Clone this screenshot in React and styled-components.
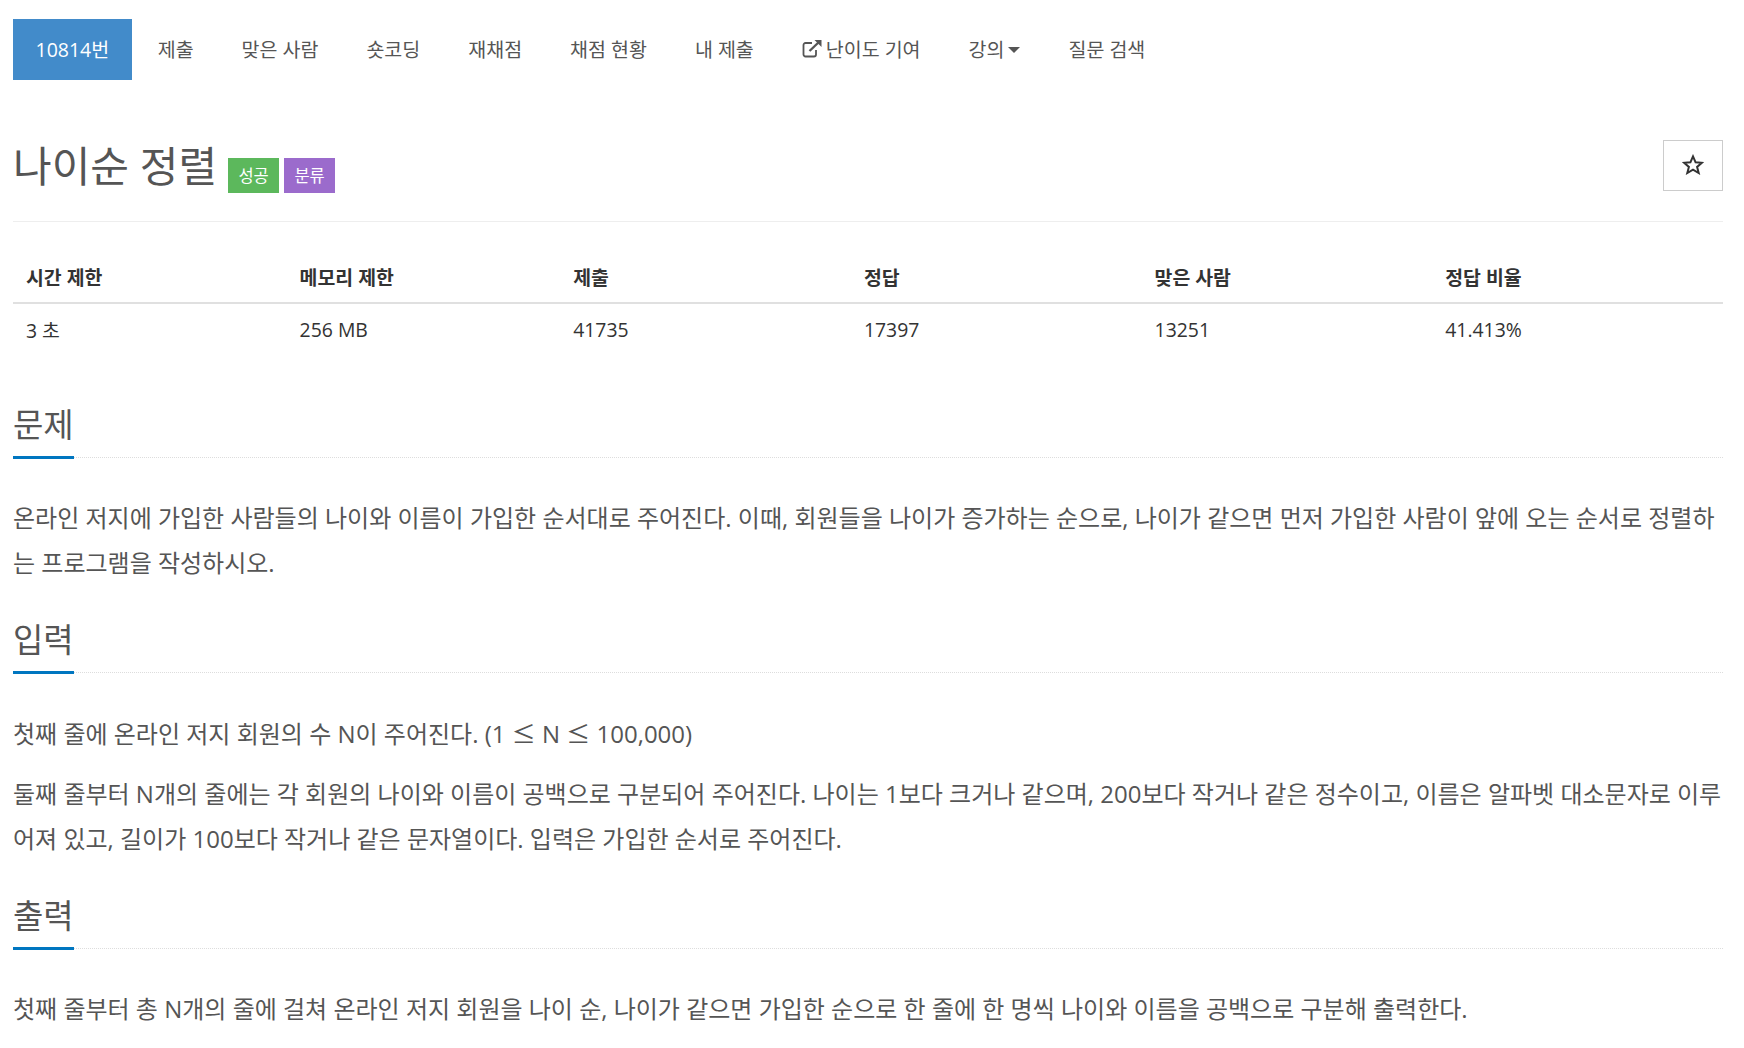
import React from "react";
import styled, { createGlobalStyle } from "styled-components";

const FONT = `"Open Sans", "Noto Sans CJK KR", sans-serif`;

const tabs = [
  { label: "10814번", active: true },
  { label: "제출" },
  { label: "맞은 사람" },
  { label: "숏코딩" },
  { label: "재채점" },
  { label: "채점 현황" },
  { label: "내 제출" },
  { label: "난이도 기여", external: true },
  { label: "강의", caret: true },
  { label: "질문 검색" },
];

const columns = [
  { title: "시간 제한", value: "3 초", width: "16%" },
  { title: "메모리 제한", value: "256 MB", width: "16%" },
  { title: "제출", value: "41735", width: "17%" },
  { title: "정답", value: "17397", width: "17%" },
  { title: "맞은 사람", value: "13251", width: "17%" },
  { title: "정답 비율", value: "41.413%", width: "17%" },
];

function ExternalIcon() {
  return (
    <svg width="21" height="19" viewBox="0 0 21 19" fill="none" stroke="currentColor">
      <path d="M14 11v4.5a2 2 0 0 1-2 2H3.5a2 2 0 0 1-2-2V6a2 2 0 0 1 2-2H10" strokeWidth="1.8" />
      <path d="M7.5 12L17 3" strokeWidth="2.4" />
      <path d="M12.5 1h7v7z" fill="currentColor" stroke="none" />
    </svg>
  );
}

function StarIcon() {
  return (
    <svg width="22" height="21" viewBox="0 0 22 21" fill="none" stroke="#333" strokeWidth="2">
      <path d="M11 2.4l2.6 5.9 6.3.5-4.8 4.1 1.6 6.1L11 15.7l-5.7 3.3 1.6-6.1L2.100 8.800l6.300-.5z" />
    </svg>
  );
}

export default function App() {
  return (
    <>
      <GlobalStyle />
      <Page>
        <TabBar>
          {tabs.map((tab) => (
            <Tab key={tab.label} $active={tab.active}>
              {tab.external && <ExternalIcon />}
              {tab.label}
              {tab.caret && <Caret />}
            </Tab>
          ))}
        </TabBar>

        <TitleRow>
          <Title>
            나이순 정렬
            <Badge $color="#5cb85c" $first>성공</Badge>
            <Badge $color="#9b6bcc">분류</Badge>
          </Title>
          <StarButton>
            <StarIcon />
          </StarButton>
        </TitleRow>

        <InfoTable>
          <colgroup>
            {columns.map((col) => (
              <col key={col.title} width={col.width} />
            ))}
          </colgroup>
          <thead>
            <tr>
              {columns.map((col) => (
                <HeadCell key={col.title}>{col.title}</HeadCell>
              ))}
            </tr>
          </thead>
          <tbody>
            <tr>
              {columns.map((col) => (
                <BodyCell key={col.title}>{col.value}</BodyCell>
              ))}
            </tr>
          </tbody>
        </InfoTable>

        <Section $top="42px">
          <SectionHead>
            <SectionTitle>문제</SectionTitle>
          </SectionHead>
          <Body>
            <Para>
              온라인 저지에 가입한 사람들의 나이와 이름이 가입한 순서대로 주어진다. 이때, 회원들을 나이가
              증가하는 순으로, 나이가 같으면 먼저 가입한 사람이 앞에 오는 순서로 정렬하는 프로그램을
              작성하시오.
            </Para>
          </Body>
        </Section>

        <Section $top="27px">
          <SectionHead>
            <SectionTitle>입력</SectionTitle>
          </SectionHead>
          <Body>
            <Para>
              첫째 줄에 온라인 저지 회원의 수 N이 주어진다. (1 <MathSign>≤</MathSign> N{" "}
              <MathSign>≤</MathSign> 100,000)
            </Para>
            <Para>
              둘째 줄부터 N개의 줄에는 각 회원의 나이와 이름이 공백으로 구분되어 주어진다. 나이는 1보다
              크거나 같으며, 200보다 작거나 같은 정수이고, 이름은 알파벳 대소문자로 이루어져 있고, 길이가
              100보다 작거나 같은 문자열이다. 입력은 가입한 순서로 주어진다.
            </Para>
          </Body>
        </Section>

        <Section $top="27px">
          <SectionHead>
            <SectionTitle>출력</SectionTitle>
          </SectionHead>
          <Body>
            <Para>
              첫째 줄부터 총 N개의 줄에 걸쳐 온라인 저지 회원을 나이 순, 나이가 같으면 가입한 순으로 한
              줄에 한 명씩 나이와 이름을 공백으로 구분해 출력한다.
            </Para>
          </Body>
        </Section>
      </Page>
    </>
  );
}

const GlobalStyle = createGlobalStyle`
  html, body {
    margin: 0;
    padding: 0;
    background: #fff;
    overflow: hidden;
  }
  body {
    font-family: ${FONT};
    color: #555;
  }
`;

const Page = styled.div`
  height: 1048px;
  box-sizing: border-box;
  padding: 19px 21px 0 13px;
  overflow: hidden;
`;

const TabBar = styled.nav`
  display: flex;
  gap: 2px;
  height: 61px;
`;

const Tab = styled.a`
  display: flex;
  align-items: center;
  gap: 3px;
  padding: 0 ${(p) => (p.$active ? "22.5px" : "23px")} 2px;
  margin-right: ${(p) => (p.$active ? "1px" : "0")};
  font-size: 19.5px;
  color: ${(p) => (p.$active ? "#fff" : "#555")};
  background: ${(p) => (p.$active ? "#428bca" : "transparent")};
  white-space: nowrap;
`;

const Caret = styled.span`
  width: 0;
  height: 0;
  margin-left: 1px;
  margin-top: 3px;
  border-top: 6px solid #555;
  border-left: 6px solid transparent;
  border-right: 6px solid transparent;
`;

const TitleRow = styled.div`
  display: flex;
  justify-content: space-between;
  align-items: flex-start;
  height: 142px;
  box-sizing: border-box;
  padding-top: 60px;
  border-bottom: 1px solid #eee;
  margin-bottom: 37px;
`;

const Title = styled.h1`
  display: flex;
  align-items: flex-end;
  margin: 0;
  font-size: 42px;
  font-weight: 400;
  line-height: 52px;
  color: #555;
`;

const Badge = styled.span`
  width: 51px;
  height: 35px;
  box-sizing: border-box;
  padding-top: 2px;
  margin-left: ${(p) => (p.$first ? "11px" : "5px")};
  margin-bottom: -1px;
  display: flex;
  align-items: center;
  justify-content: center;
  background: ${(p) => p.$color};
  color: #fff;
  font-size: 16.5px;
  font-weight: 400;
  line-height: 1;
`;

const StarButton = styled.button`
  width: 60px;
  height: 51px;
  padding: 0 0 2px;
  display: flex;
  align-items: center;
  justify-content: center;
  background: #fff;
  border: 1px solid #ccc;
`;

const InfoTable = styled.table`
  width: 100%;
  border-collapse: collapse;
  table-layout: fixed;
  font-size: 19.4px;
`;

const HeadCell = styled.th`
  height: 44px;
  padding: 0 13px 9px;
  box-sizing: border-box;
  text-align: left;
  font-weight: 700;
  color: #333;
  border-bottom: 2px solid #e0e0e0;
`;

const BodyCell = styled.td`
  height: 52px;
  padding: 0 13px;
  box-sizing: border-box;
  color: #333;
`;

const Section = styled.section`
  margin-top: ${(p) => p.$top};
`;

const SectionHead = styled.div`
  height: 61px;
  box-sizing: border-box;
  border-bottom: 1px dotted #ddd;
  margin-bottom: 37px;
`;

const SectionTitle = styled.h2`
  display: inline-block;
  margin: 0;
  height: 62px;
  box-sizing: border-box;
  border-bottom: 3px solid #0076c0;
  font-size: 33px;
  font-weight: 400;
  line-height: 56px;
  color: #555;
`;

const Body = styled.div`
  font-size: 24px;
  line-height: 45px;
`;

const Para = styled.p`
  margin: 0 0 15px;
`;

const MathSign = styled.span`
  font-family: "Noto Sans CJK KR", sans-serif;
`;
